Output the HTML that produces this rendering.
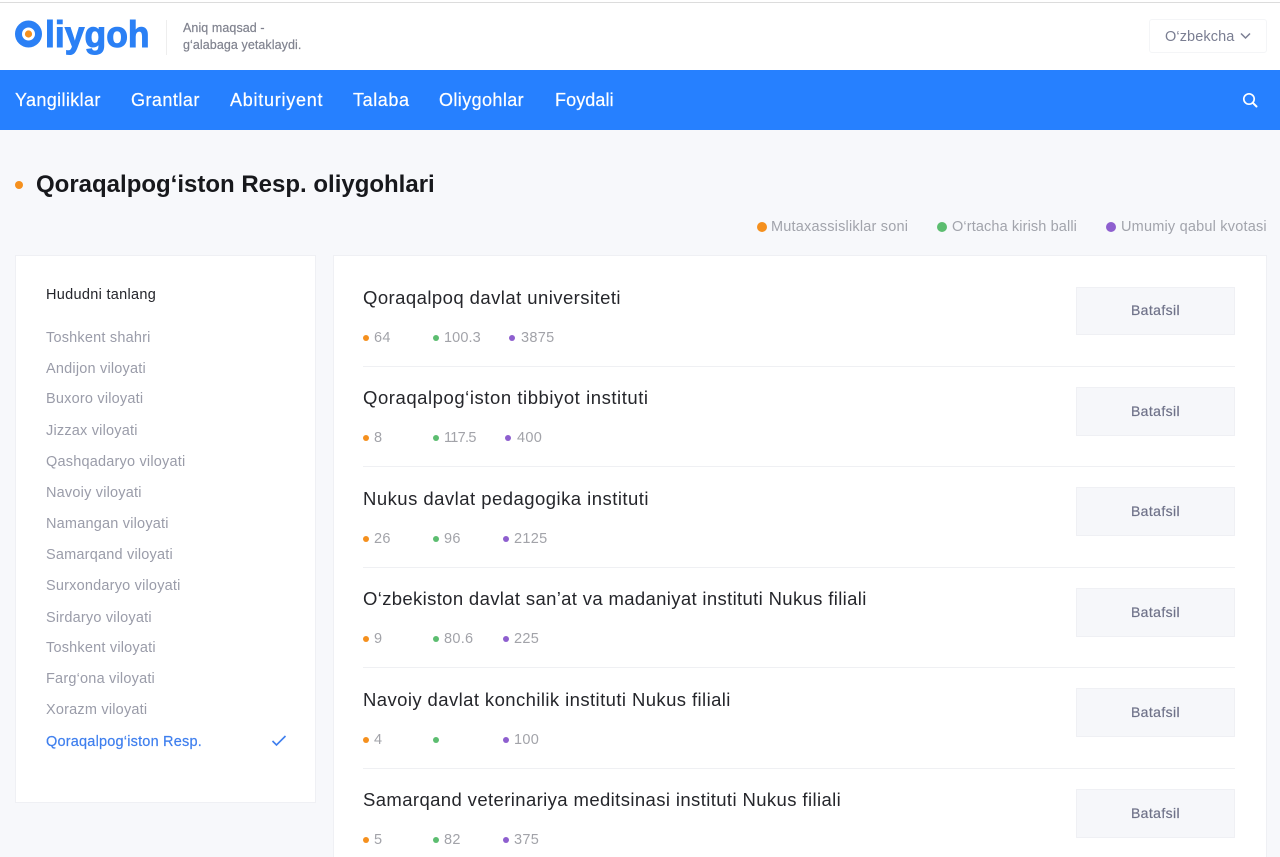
<!DOCTYPE html>
<html lang="uz">
<head>
<meta charset="utf-8">
<title>Qoraqalpog‘iston Resp. oliygohlari</title>
<style>
*{box-sizing:border-box;margin:0;padding:0}
html,body{width:1280px;height:857px;overflow:hidden;background:#f7f8fb}
body{position:relative;font-family:"Liberation Sans",sans-serif;color:#1c1d22}
div,span,a,h1,h2{position:absolute;white-space:nowrap;display:block;text-decoration:none}
.top{left:0;top:0;width:1280px;height:70px;background:#fff;border-top:1px solid #fff}
.topline{left:0;top:2px;width:1280px;height:1px;background:#dcdcdc}
.word{left:45px;top:13px;font-size:37px;line-height:44px;font-weight:700;color:#2b80f5;-webkit-text-stroke:1px #2b80f5;transform:scaleX(.96);transform-origin:0 50%}
.vr{left:166px;top:20px;width:1px;height:35px;background:#eeeeee}
.tag{left:183px;font-size:12.5px;line-height:16px;color:#80838f;-webkit-text-stroke:.2px #80838f;letter-spacing:.08px}
.lang{left:1149px;top:19px;width:118px;height:34px;border:1px solid #f4f5f7;border-radius:3px}
.lang span{left:15px;top:9px;font-size:14.5px;line-height:17px;color:#7a7e92;letter-spacing:.1px}
.nav{left:0;top:70px;width:1280px;height:60px;background:#2680ff}
.nav a{top:19px;font-size:18px;line-height:22px;color:#fff;-webkit-text-stroke:.2px #fff}
h1{left:36px;top:170px;font-size:24px;line-height:29px;font-weight:700;color:#17181c;letter-spacing:0}
.dot{border-radius:50%}
.legend{top:219px;font-size:14.5px;line-height:17px;color:#a2a4ac;letter-spacing:.2px}
.card{background:#fff;border:1px solid #eff0f4}
.side{left:15px;top:255px;width:301px;height:548px}
.main{left:333px;top:255px;width:934px;height:640px}
.hd{left:46px;top:287px;font-size:14.5px;line-height:17px;color:#24252b;letter-spacing:.3px}
.reg{left:46px;font-size:14.5px;line-height:17px;color:#9a9ca9;letter-spacing:.2px}
.reg.on{color:#3f7fee;-webkit-text-stroke:.2px #3f7fee}
h2{left:363px;font-size:18.5px;line-height:22px;font-weight:400;color:#25262b;letter-spacing:.41px}
.num{font-size:14.5px;line-height:17px;color:#a2a3a9;letter-spacing:.3px}
.s{width:6px;height:6px;border-radius:50%}
.o{background:#f5901e}.g{background:#5cbd70}.p{background:#8e5fcf}
.hr{left:363px;width:872px;height:1px;background:#eff0f3}
.btn{left:1076px;width:159px;height:49px;background:#f6f7fa;border:1px solid #eff0f4;text-align:center;font-size:14px;line-height:46px;color:#6f7289;-webkit-text-stroke:.2px #6f7289;letter-spacing:.4px}
</style>
</head>
<body>
<div class="top"></div>
<div class="topline"></div>

<svg style="position:absolute;left:15px;top:20px" width="28" height="28" viewBox="0 0 28 28" aria-hidden="true"><circle cx="13.5" cy="14" r="10" fill="#fff" stroke="#2b80f5" stroke-width="7"/><circle cx="13.5" cy="14" r="3.6" fill="#f5901e"/></svg>
<div class="word">liygoh</div>
<div class="vr"></div>
<div class="tag" style="top:20px">Aniq maqsad -</div>
<div class="tag" style="top:37px">g‘alabaga yetaklaydi.</div>
<div class="lang"><span>O‘zbekcha</span>
<svg style="position:absolute;left:90px;top:12px" width="11" height="8" viewBox="0 0 11 8" aria-hidden="true"><path d="M1 1.5 5.5 6 10 1.5" fill="none" stroke="#7a7e92" stroke-width="1.5"/></svg></div>

<div class="nav">
<a href="#" style="left:15px;letter-spacing:.37px">Yangiliklar</a>
<a href="#" style="left:131px;letter-spacing:.47px">Grantlar</a>
<a href="#" style="left:230px;letter-spacing:.74px">Abituriyent</a>
<a href="#" style="left:353px;letter-spacing:.6px">Talaba</a>
<a href="#" style="left:439px;letter-spacing:.4px">Oliygohlar</a>
<a href="#" style="left:555px;letter-spacing:.1px">Foydali</a>
<svg style="position:absolute;left:1242px;top:22px" width="16" height="16" viewBox="0 0 16 16" aria-hidden="true"><circle cx="7" cy="7" r="5.2" fill="none" stroke="#fff" stroke-width="1.7"/><path d="M10.8 10.8 14.5 14.5" stroke="#fff" stroke-width="2" stroke-linecap="round"/></svg>
</div>

<div class="dot o" style="left:15px;top:181px;width:8px;height:8px"></div>
<h1>Qoraqalpog‘iston Resp. oliygohlari</h1>

<div class="dot o" style="left:757px;top:222px;width:10px;height:10px"></div>
<div class="legend" style="left:771px">Mutaxassisliklar soni</div>
<div class="dot g" style="left:937px;top:222px;width:10px;height:10px"></div>
<div class="legend" style="left:952px;letter-spacing:.12px">O‘rtacha kirish balli</div>
<div class="dot p" style="left:1106px;top:222px;width:10px;height:10px"></div>
<div class="legend" style="left:1121px">Umumiy qabul kvotasi</div>

<div class="card side"></div>
<div class="hd">Hududni tanlang</div>
<a href="#" class="reg" style="top:330px">Toshkent shahri</a>
<a href="#" class="reg" style="top:361px">Andijon viloyati</a>
<a href="#" class="reg" style="top:391px">Buxoro viloyati</a>
<a href="#" class="reg" style="top:423px">Jizzax viloyati</a>
<a href="#" class="reg" style="top:454px">Qashqadaryo viloyati</a>
<a href="#" class="reg" style="top:485px">Navoiy viloyati</a>
<a href="#" class="reg" style="top:516px">Namangan viloyati</a>
<a href="#" class="reg" style="top:547px">Samarqand viloyati</a>
<a href="#" class="reg" style="top:578px">Surxondaryo viloyati</a>
<a href="#" class="reg" style="top:610px">Sirdaryo viloyati</a>
<a href="#" class="reg" style="top:640px">Toshkent viloyati</a>
<a href="#" class="reg" style="top:671px">Farg‘ona viloyati</a>
<a href="#" class="reg" style="top:702px">Xorazm viloyati</a>
<a href="#" class="reg on" style="top:734px">Qoraqalpog‘iston Resp.</a>
<svg style="position:absolute;left:271px;top:734px" width="16" height="13" viewBox="0 0 16 13" aria-hidden="true"><path d="M1.5 7 5.5 11 14.5 2" fill="none" stroke="#3f7fee" stroke-width="1.6"/></svg>

<div class="card main"></div>

<h2 style="top:287px;letter-spacing:.44px">Qoraqalpoq davlat universiteti</h2>
<div class="s o" style="left:363px;top:335px"></div><div class="num" style="left:374px;top:330px">64</div>
<div class="s g" style="left:433px;top:335px"></div><div class="num" style="left:444px;top:330px;letter-spacing:.1px">100.3</div>
<div class="s p" style="left:509px;top:335px"></div><div class="num" style="left:521px;top:330px">3875</div>
<a href="#" class="btn" style="top:287px;height:48px;line-height:45px">Batafsil</a>
<div class="hr" style="top:366px"></div>

<h2 style="top:387px;letter-spacing:.55px">Qoraqalpog‘iston tibbiyot instituti</h2>
<div class="s o" style="left:363px;top:435px"></div><div class="num" style="left:374px;top:430px">8</div>
<div class="s g" style="left:433px;top:435px"></div><div class="num" style="left:444px;top:430px;letter-spacing:-.7px">117.5</div>
<div class="s p" style="left:505px;top:435px"></div><div class="num" style="left:517px;top:430px">400</div>
<a href="#" class="btn" style="top:387px">Batafsil</a>
<div class="hr" style="top:466px"></div>

<h2 style="top:488px;letter-spacing:.47px">Nukus davlat pedagogika instituti</h2>
<div class="s o" style="left:363px;top:536px"></div><div class="num" style="left:374px;top:531px">26</div>
<div class="s g" style="left:433px;top:536px"></div><div class="num" style="left:444px;top:531px">96</div>
<div class="s p" style="left:503px;top:536px"></div><div class="num" style="left:514px;top:531px">2125</div>
<a href="#" class="btn" style="top:487px">Batafsil</a>
<div class="hr" style="top:567px"></div>

<h2 style="top:588px;letter-spacing:.345px">O‘zbekiston davlat san’at va madaniyat instituti Nukus filiali</h2>
<div class="s o" style="left:363px;top:636px"></div><div class="num" style="left:374px;top:631px">9</div>
<div class="s g" style="left:433px;top:636px"></div><div class="num" style="left:444px;top:631px">80.6</div>
<div class="s p" style="left:503px;top:636px"></div><div class="num" style="left:514px;top:631px">225</div>
<a href="#" class="btn" style="top:588px">Batafsil</a>
<div class="hr" style="top:667px"></div>

<h2 style="top:689px">Navoiy davlat konchilik instituti Nukus filiali</h2>
<div class="s o" style="left:363px;top:737px"></div><div class="num" style="left:374px;top:732px">4</div>
<div class="s g" style="left:433px;top:737px"></div>
<div class="s p" style="left:503px;top:737px"></div><div class="num" style="left:514px;top:732px">100</div>
<a href="#" class="btn" style="top:688px">Batafsil</a>
<div class="hr" style="top:768px"></div>

<h2 style="top:789px;letter-spacing:.39px">Samarqand veterinariya meditsinasi instituti Nukus filiali</h2>
<div class="s o" style="left:363px;top:837px"></div><div class="num" style="left:374px;top:832px">5</div>
<div class="s g" style="left:433px;top:837px"></div><div class="num" style="left:444px;top:832px">82</div>
<div class="s p" style="left:503px;top:837px"></div><div class="num" style="left:514px;top:832px">375</div>
<a href="#" class="btn" style="top:789px">Batafsil</a>
</body>
</html>
